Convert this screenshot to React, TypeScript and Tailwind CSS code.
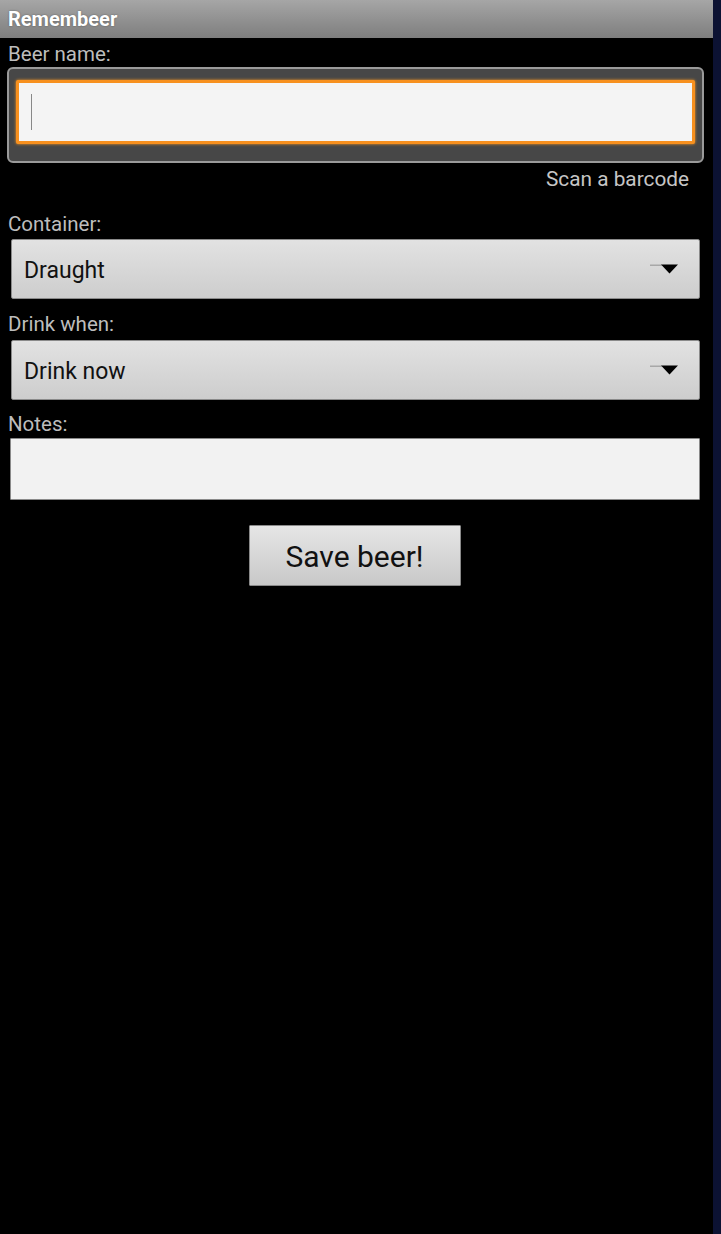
import React from "react";

function Arrow() {
  return (
    <svg width="28" height="11" viewBox="0 0 28 11" className="shrink-0">
      <rect x="0" y="0.5" width="12" height="1.5" fill="#a8a8a8" />
      <polygon points="11,0.5 28,0.5 19.5,9.5" fill="#000" />
    </svg>
  );
}

function Spinner({ value }: { value: string }) {
  return (
    <div className="ml-[11px] mr-[13px] flex h-[60px] items-center justify-between rounded-[2px] border border-[#8a8a8a] bg-gradient-to-b from-[#e2e2e2] to-[#cdcdcd] pl-[12px] pr-[21px]">
      <span className="pt-[3px] text-[23px] leading-[28px] text-[#111]">{value}</span>
      <Arrow />
    </div>
  );
}

export default function App() {
  return (
    <div className="flex h-[1234px] w-[721px] bg-black" style={{ fontFamily: "Roboto, 'Noto Sans', sans-serif" }}>
      <div className="flex w-[713px] flex-col">
        <div className="flex h-[38px] items-center bg-gradient-to-b from-[#a6a6a6] to-[#7e7e7e] px-[8px]">
          <span className="text-[20px] font-bold leading-[24px] text-white [text-shadow:0_0_2px_rgba(0,0,0,0.4)]">Remembeer</span>
        </div>
        <div className="mt-[4px] px-[8px] text-[20.5px] leading-[24px] text-[#bdbdbd]">Beer name:</div>
        <div className="ml-[7px] mr-[9px] mt-[1px] h-[96px] rounded-[6px] border-2 border-[#9a9a9a] bg-[#474747] pl-[7px] pr-[7px] pt-[11px]">
          <div className="flex h-[64px] items-center rounded-[2px] border-[3px] border-[#f7901e] bg-[#f4f4f4] pl-[12px] shadow-[0_0_3px_#ff9a20]">
            <div className="h-[36px] w-[1px] bg-[#888]" />
          </div>
        </div>
        <div className="mt-[4px] pr-[24px] text-right text-[20.8px] leading-[24px] text-[#c6c6c6]">Scan a barcode</div>
        <div className="mt-[21px] px-[8px] text-[20.5px] leading-[24px] text-[#bdbdbd]">Container:</div>
        <div className="mt-[3px]">
          <Spinner value="Draught" />
        </div>
        <div className="mt-[13px] px-[8px] text-[20.5px] leading-[24px] text-[#bdbdbd]">Drink when:</div>
        <div className="mt-[4px]">
          <Spinner value="Drink now" />
        </div>
        <div className="mt-[12px] px-[8px] text-[20.5px] leading-[24px] text-[#bdbdbd]">Notes:</div>
        <div className="ml-[10px] mr-[13px] mt-[2px] h-[62px] rounded-[1px] border border-[#8a8a8a] bg-[#f2f2f2]" />
        <div className="mt-[25px] flex justify-center">
          <div className="ml-[-4px] flex h-[61px] w-[212px] items-center justify-center rounded-[1px] border border-[#8a8a8a] bg-gradient-to-b from-[#e6e6e6] to-[#c8c8c8] pt-[3px] text-[30px] leading-[34px] text-[#111]">
            Save beer!
          </div>
        </div>
      </div>
      <div className="w-[8px] bg-[#0c1233]" />
    </div>
  );
}
